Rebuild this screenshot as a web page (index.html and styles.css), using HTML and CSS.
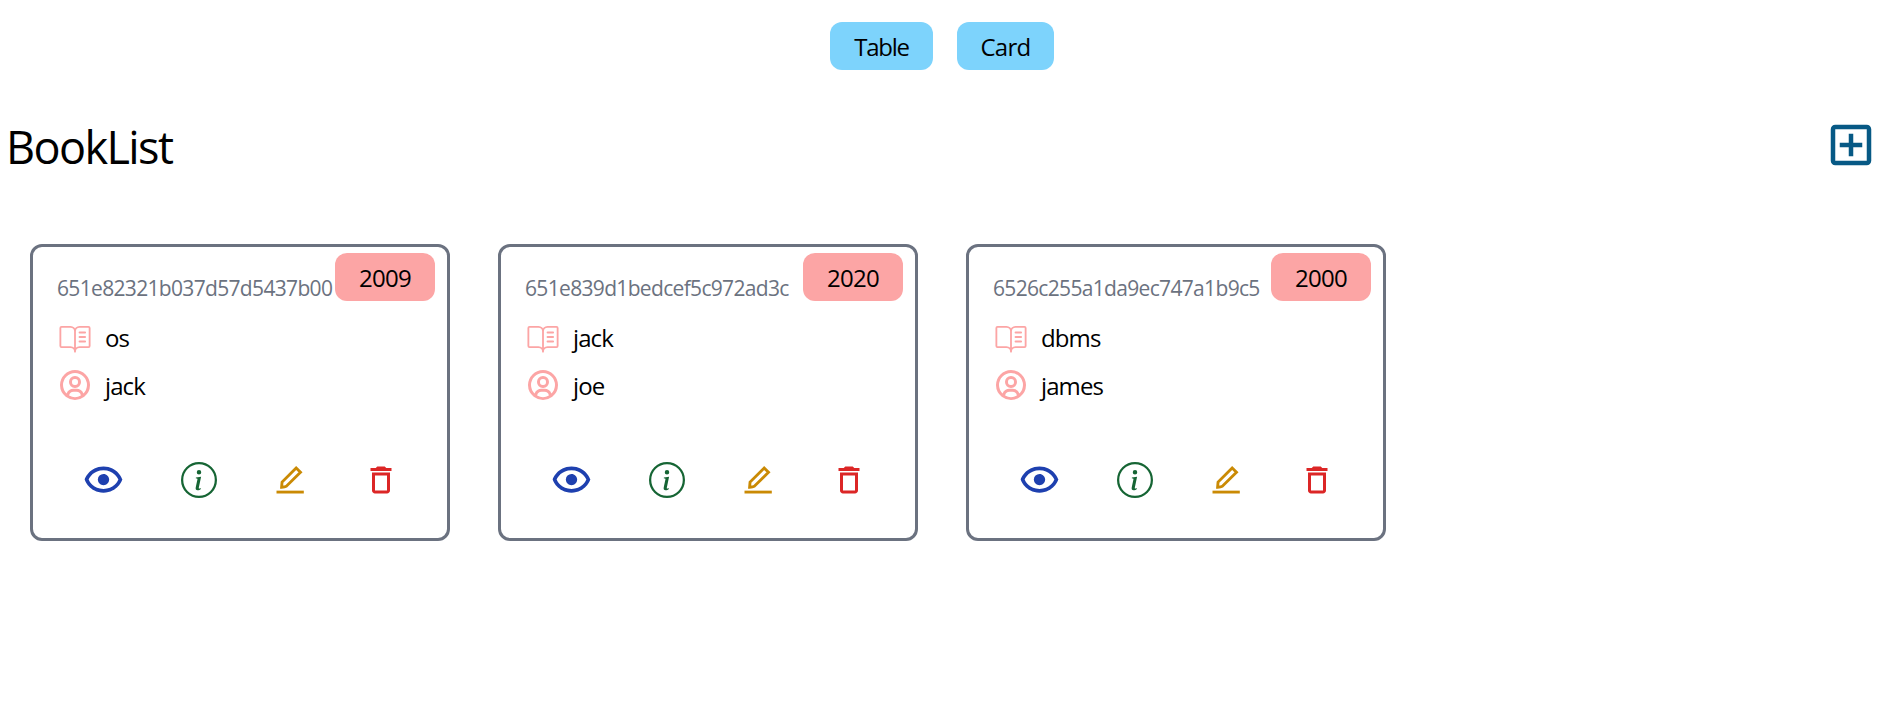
FILE: index.html
```html
<!DOCTYPE html>
<html lang="en">
<head>
<meta charset="utf-8">
<title>BookList</title>
<link rel="stylesheet" href="styles.css">
</head>
<body>
<svg class="sprite" aria-hidden="true">
  <symbol id="book" viewBox="0 0 256 256"><path fill="none" stroke="currentColor" stroke-width="13" stroke-linecap="round" stroke-linejoin="round" d="M128 88a32 32 0 0 1 32-32h64a8 8 0 0 1 8 8v128a8 8 0 0 1-8 8h-64a32 32 0 0 0-32 32a32 32 0 0 0-32-32H32a8 8 0 0 1-8-8V64a8 8 0 0 1 8-8h64a32 32 0 0 1 32 32v144M160 96h40M160 128h40M160 160h40"/></symbol>
  <symbol id="user" viewBox="0 0 24 24"><path d="M12 2A10.13 10.13 0 0 0 2 12a10 10 0 0 0 4 7.92V20h.1a9.7 9.7 0 0 0 11.8 0h.1v-.08A10 10 0 0 0 22 12 10.13 10.13 0 0 0 12 2zM8.07 18.93A3 3 0 0 1 11 16.57h2a3 3 0 0 1 2.93 2.36 7.75 7.75 0 0 1-7.86 0zm9.54-1.29A5 5 0 0 0 13 14.57h-2a5 5 0 0 0-4.61 3.07A8 8 0 0 1 4 12a8.1 8.1 0 0 1 8-8 8.1 8.1 0 0 1 8 8 8 8 0 0 1-2.39 5.64z"/><path d="M12 6a3.91 3.91 0 0 0-4 4 3.91 3.91 0 0 0 4 4 3.91 3.91 0 0 0 4-4 3.91 3.91 0 0 0-4-4zm0 6a1.91 1.91 0 0 1-2-2 1.91 1.91 0 0 1 2-2 1.91 1.91 0 0 1 2 2 1.91 1.91 0 0 1-2 2z"/></symbol>
  <symbol id="show" viewBox="0 0 24 24"><path d="M12 9a3.02 3.02 0 0 0-3 3c0 1.642 1.358 3 3 3 1.641 0 3-1.358 3-3 0-1.641-1.359-3-3-3z"/><path d="M12 5c-7.633 0-9.927 6.617-9.948 6.684L1.946 12l.105.316C2.073 12.383 4.367 19 12 19s9.927-6.617 9.948-6.684l.106-.316-.105-.316C21.927 11.617 19.633 5 12 5zm0 12c-5.351 0-7.424-3.846-7.926-5C4.578 10.842 6.652 7 12 7c5.351 0 7.424 3.846 7.926 5-.504 1.158-2.578 5-7.926 5z"/></symbol>
  <symbol id="info" viewBox="0 0 16 16"><path d="M8 15A7 7 0 1 1 8 1a7 7 0 0 1 0 14zm0 1A8 8 0 1 0 8 0a8 8 0 0 0 0 16z"/><path d="m8.93 6.588-2.29.287-.082.38.45.083c.294.07.352.176.288.469l-.738 3.468c-.194.897.105 1.319.808 1.319.545 0 1.178-.252 1.465-.598l.088-.416c-.2.176-.492.246-.686.246-.275 0-.375-.193-.304-.533L8.93 6.588zM9 4.5a1 1 0 1 1-2 0 1 1 0 0 1 2 0z"/></symbol>
  <symbol id="edit" viewBox="0 0 24 24"><path fill="none" stroke="currentColor" stroke-width="1.9" d="M6.4 16.8L6.7 13.4L16.1 4L19 6.9L9.4 16.3Q8.7 16.8 6.4 16.8z"/><path d="M3 19.1h18.2V21H3z"/></symbol>
  <symbol id="trash" viewBox="0 0 24 24"><path fill-rule="evenodd" d="M6 19c0 1.1.9 2 2 2h8c1.1 0 2-.9 2-2V7H6v12zM8 9h8v10H8V9zm7.5-5l-1-1h-5l-1 1H5v2h14V4z"/></symbol>
  <symbol id="add" viewBox="0 0 24 24"><path d="M19 3H5c-1.11 0-2 .9-2 2v14c0 1.1.89 2 2 2h14c1.1 0 2-.9 2-2V5c0-1.1-.9-2-2-2zm0 16H5V5h14v14zm-8-2h2v-4h4v-2h-4V7h-2v4H7v2h4z"/></symbol>
</svg>
<nav class="switcher">
  <button class="view-button view-table">Table</button>
  <button class="view-button view-card">Card</button>
</nav>
<header class="heading">
  <h1 class="title">BookList</h1>
  <svg class="add-icon"><use href="#add"/></svg>
</header>
<main class="cards">
  <article class="card">
    <h2 class="year">2009</h2>
    <h4 class="book-id">651e82321b037d57d5437b00</h4>
    <div class="row"><svg class="icon"><use href="#book"/></svg><span>os</span></div>
    <div class="row"><svg class="icon"><use href="#user"/></svg><span>jack</span></div>
    <div class="actions">
      <svg class="icon show"><use href="#show"/></svg><svg class="icon info"><use href="#info"/></svg><svg class="icon edit"><use href="#edit"/></svg><svg class="icon trash"><use href="#trash"/></svg>
    </div>
  </article>
  <article class="card">
    <h2 class="year">2020</h2>
    <h4 class="book-id">651e839d1bedcef5c972ad3c</h4>
    <div class="row"><svg class="icon"><use href="#book"/></svg><span>jack</span></div>
    <div class="row"><svg class="icon"><use href="#user"/></svg><span>joe</span></div>
    <div class="actions">
      <svg class="icon show"><use href="#show"/></svg><svg class="icon info"><use href="#info"/></svg><svg class="icon edit"><use href="#edit"/></svg><svg class="icon trash"><use href="#trash"/></svg>
    </div>
  </article>
  <article class="card">
    <h2 class="year">2000</h2>
    <h4 class="book-id">6526c255a1da9ec747a1b9c5</h4>
    <div class="row"><svg class="icon"><use href="#book"/></svg><span>dbms</span></div>
    <div class="row"><svg class="icon"><use href="#user"/></svg><span>james</span></div>
    <div class="actions">
      <svg class="icon show"><use href="#show"/></svg><svg class="icon info"><use href="#info"/></svg><svg class="icon edit"><use href="#edit"/></svg><svg class="icon trash"><use href="#trash"/></svg>
    </div>
  </article>
</main>
</body>
</html>
```

FILE: styles.css
```css
* { box-sizing: border-box; }
body {
  margin: 0;
  background: #fff;
  color: #000;
  font: 400 24px/36px "Open Sans", "Noto Sans", sans-serif;
  letter-spacing: -0.7px;
}
svg { display: block; fill: currentColor; flex: none; }
.sprite { position: absolute; width: 0; height: 0; }
.switcher { display: flex; justify-content: center; gap: 24px; padding: 22px 18px 0 0; }
.view-button {
  height: 48px;
  padding: 1px 0 0;
  border: 0;
  border-radius: 12px;
  background: #7dd3fc;
  color: inherit;
  font: inherit;
  letter-spacing: -0.7px;
}
.view-table { width: 103px; letter-spacing: -1.3px; }
.view-card { width: 97px; }
.heading {
  display: flex;
  justify-content: space-between;
  align-items: flex-start;
  height: 126px;
  margin-top: 48px;
  padding: 0 24px 0 6px;
}
.title { margin: 2px 0 0; font-size: 45px; line-height: 54px; font-weight: 400; letter-spacing: -1.6px; }
.add-icon { width: 54px; height: 54px; color: #075985; }
.cards { display: grid; grid-template-columns: repeat(3, 420px); gap: 48px; padding-left: 30px; }
.card {
  position: relative;
  height: 297px;
  padding: 24px;
  border: 3px solid #6b7280;
  border-radius: 12px;
}
.year {
  position: absolute;
  top: 6px;
  right: 12px;
  width: 100px;
  height: 48px;
  margin: 0;
  padding-top: 1px;
  border-radius: 12px;
  background: #fca5a5;
  font-size: 24px;
  line-height: 48px;
  font-weight: 400;
  text-align: center;
}
.book-id {
  margin: -1px 0 13px;
  color: #6b7280;
  font-size: 21px;
  line-height: 36px;
  font-weight: 400;
  letter-spacing: -0.67px;
  white-space: nowrap;
}
.row { display: flex; gap: 12px; height: 36px; margin-bottom: 12px; }
.row span { padding-top: 1px; letter-spacing: -0.9px; }
.icon { width: 36px; height: 36px; }
.row .icon { color: #fca5a5; }
.actions { display: flex; justify-content: space-between; align-items: center; margin-top: 54px; padding: 0 24px; }
.actions .show { width: 45px; height: 45px; color: #1e40af; }
.info { color: #166534; }
.edit { color: #ca8a04; }
.trash { color: #dc2626; }
```
